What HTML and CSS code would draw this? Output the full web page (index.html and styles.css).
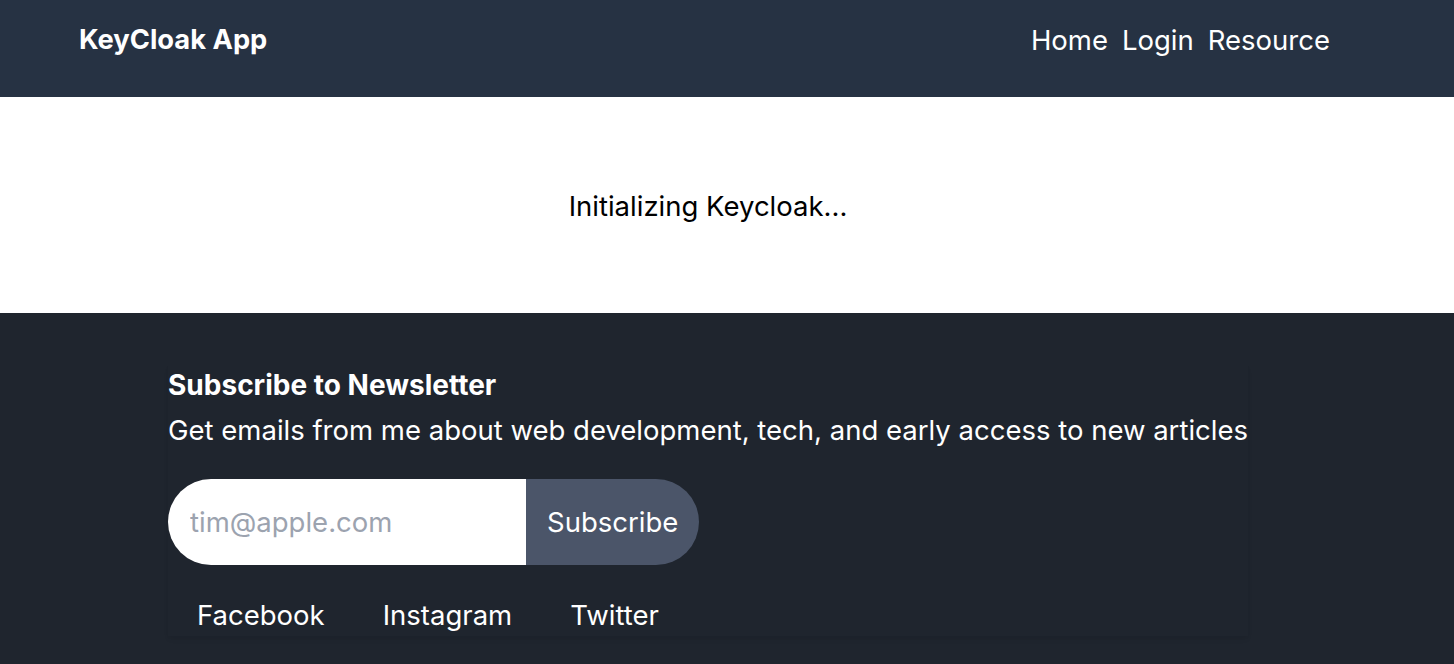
FILE: index.html
```html
<!DOCTYPE html>
<html lang="en">
<head>
<meta charset="utf-8">
<title>KeyCloak App</title>
<link rel="stylesheet" href="styles.css">
</head>
<body>
<header class="topbar">
  <div class="brand">KeyCloak App</div>
  <nav class="nav">
    <a href="#">Home</a>
    <a href="#">Login</a>
    <a href="#">Resource</a>
  </nav>
</header>
<main class="main">
  <p class="status">Initializing Keycloak...</p>
</main>
<footer class="footer">
  <div class="card">
    <h2 class="title">Subscribe to Newsletter</h2>
    <p class="subtitle">Get emails from me about web development, tech, and early access to new articles</p>
    <form class="form">
      <input class="email" type="email" placeholder="tim@apple.com">
      <button class="btn" type="button">Subscribe</button>
    </form>
    <div class="links">
      <a href="#">Facebook</a>
      <a href="#">Instagram</a>
      <a href="#">Twitter</a>
    </div>
  </div>
</footer>
</body>
</html>
```
FILE: styles.css
```css
* { box-sizing: border-box; }
html, body { margin: 0; padding: 0; }
body {
  font-family: Inter, "Liberation Sans", Arial, sans-serif;
  font-size: 27.5px;
  line-height: 42px;
  color: #000;
  background: #1f252e;
}
a { color: inherit; text-decoration: none; }
.topbar {
  height: 97px;
  background: #263243;
  color: #fff;
  display: flex;
  align-items: center;
  justify-content: space-between;
  padding: 0 124px 18px 79px;
}
.brand { font-weight: 700; font-size: 27.3px; }
.nav { display: flex; gap: 14px; }
.main {
  height: 216px;
  background: #fff;
  display: flex;
  align-items: center;
  justify-content: center;
  padding: 2px 38px 0 0;
}
.status { margin: 0; }
.footer {
  display: flex;
  justify-content: center;
  padding: 51px 38px 40px 0;
  color: #fff;
}
.card {
  box-shadow: 0 4px 6px -1px rgba(0,0,0,0.06), 0 2px 4px -1px rgba(0,0,0,0.04);
}
.title { margin: 0; font-size: 28px; font-weight: 700; line-height: 42px; }
.subtitle { margin: 3px 0 0; }
.form { display: flex; margin: 28px 0 0; }
.email {
  width: 358px;
  height: 86px;
  border: 0;
  border-radius: 43px 0 0 43px;
  padding: 0 22px;
  font: inherit;
  color: #111;
  background: #fff;
  outline: none;
}
.email::placeholder { color: #9ca3af; }
.btn {
  height: 86px;
  border: 0;
  border-radius: 0 43px 43px 0;
  background: #4b5569;
  color: #fff;
  font: inherit;
  padding: 0 21px;
}
.links { display: flex; margin-top: 29px; }
.links a { padding: 0 29px; }
```
